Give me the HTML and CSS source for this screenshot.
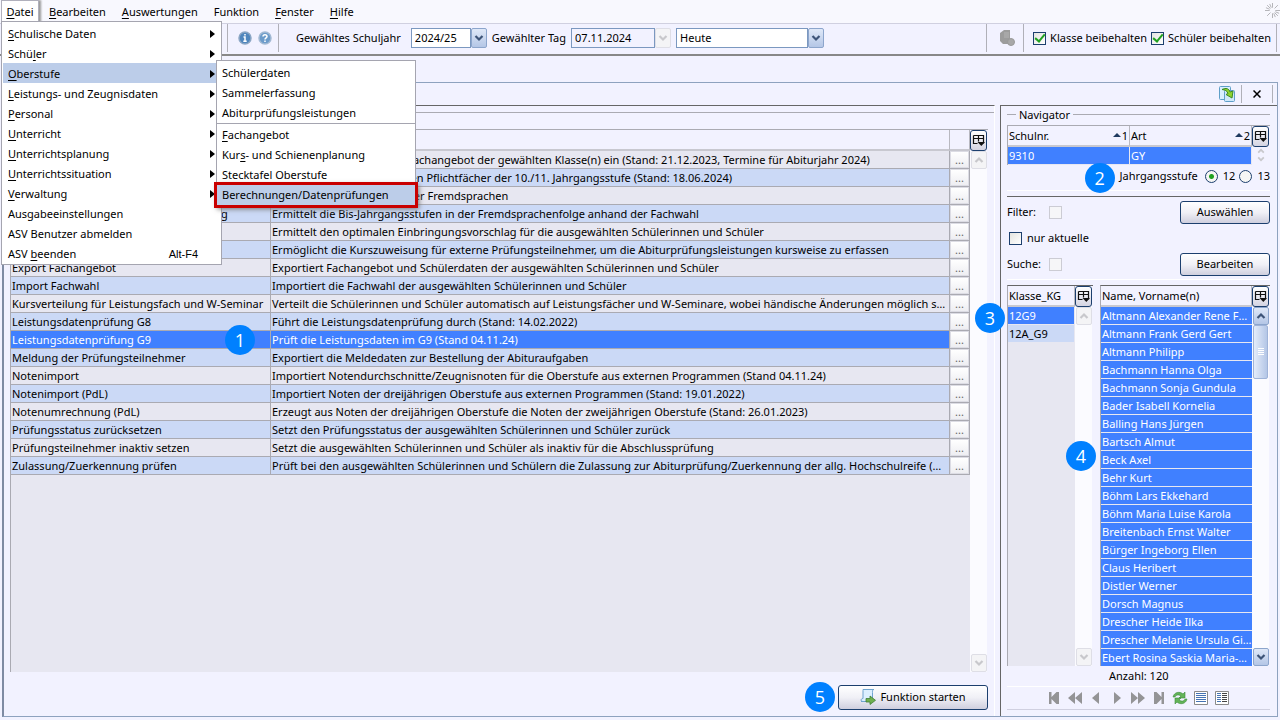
FILE: index.html
```html
<!DOCTYPE html>
<html lang="de">
<head>
  <meta charset="UTF-8">
  <title>ASV</title>
  <link rel="stylesheet" href="styles.css">
</head>
<body>
  <svg width="0" height="0" class="defs">
    <symbol id="columns" viewBox="0 0 14 14">
      <path d="M1.500 1.500h10v8M1.500 1.500v8h4M1.500 4.500h10M6.500 1.500v6" fill="none" stroke="#111" stroke-width="1.200"/>
      <path d="M5.500 8h7.500l-3.700 4z" fill="#111"/>
    </symbol>
    <symbol id="down" viewBox="0 0 10 10">
      <path d="M1.500 3l3.500 3.500l3.500-3.500" fill="none" stroke="currentColor" stroke-width="2.200"/>
    </symbol>
    <symbol id="up" viewBox="0 0 10 10">
      <path d="M1.500 7l3.500-3.500l3.500 3.500" fill="none" stroke="currentColor" stroke-width="2.200"/>
    </symbol>
  </svg>

  <nav class="menubar">
    <div class="menu open">
      <button class="menu-title"><u>D</u>atei</button>
      <div class="popup file-menu">
        <button class="item sub"><u>S</u>chulische Daten</button>
        <button class="item sub">Schü<u>l</u>er</button>
        <button class="item sub active"><u>O</u>berstufe</button>
        <button class="item sub"><u>L</u>eistungs- und Zeugnisdaten</button>
        <button class="item sub"><u>P</u>ersonal</button>
        <button class="item sub"><u>U</u>nterricht</button>
        <button class="item sub"><u>U</u>nterrichtsplanung</button>
        <button class="item sub"><u>U</u>nterrichtssituation</button>
        <button class="item sub"><u>V</u>erwaltung</button>
        <button class="item">Ausgabeeinstellungen</button>
        <button class="item">ASV Benutzer abmelden</button>
        <button class="item">ASV <u>b</u>eenden<kbd>Alt-F4</kbd></button>
      </div>
      <div class="popup sub-menu">
        <button class="item">Schüler<u>d</u>aten</button>
        <button class="item">Sammelerfassung</button>
        <button class="item">Abiturprüfungsleistungen</button>
        <hr>
        <button class="item"><u>F</u>achangebot</button>
        <button class="item">Kur<u>s</u>- und Schienenplanung</button>
        <button class="item">Stecktafel Oberstufe</button>
        <button class="item marked">Berechnungen/Datenprüfungen</button>
      </div>
    </div>
    <button class="menu-title"><u>B</u>earbeiten</button>
    <button class="menu-title"><u>A</u>uswertungen</button>
    <button class="menu-title">Funktion</button>
    <button class="menu-title"><u>F</u>enster</button>
    <button class="menu-title"><u>H</u>ilfe</button>
    <svg class="busy" width="15" height="15" viewBox="0 0 16 16">
      <path d="M8 0v5M8 11v5M0 8h5M11 8h5M2.300 2.300l3.500 3.500M10.200 10.200l3.500 3.500M2.300 13.700l3.500-3.500M10.200 5.800l3.500-3.500M5 1l1.700 4M9.300 11l1.700 4M1 5l4 1.700M11 9.300l4 1.700" stroke="#b0b0b4" fill="none"/>
    </svg>
  </nav>

  <div class="toolbar">
    <div class="tools">
      <svg width="14" height="14" viewBox="0 0 14 14"><circle cx="7" cy="7" r="6" fill="#4f86bd" stroke="#8ba6c4" stroke-width="1.500"/><path d="M7 3v1.600M5.500 6h1.500v4M5.300 10.300h3.400" stroke="#fff" stroke-width="1.500" fill="none"/></svg>
      <svg width="14" height="14" viewBox="0 0 14 14"><circle cx="7" cy="7" r="6" fill="#6c9bca" stroke="#a2b9d3" stroke-width="1.500"/><path d="M5 5.500c0-2.500 4-2.500 4 0c0 1.300-2 1.300-2 3M7 9.500v1.500" stroke="#fff" stroke-width="1.500" fill="none"/></svg>
    </div>
    <label class="year-label" for="year">Gewähltes Schuljahr</label>
    <div class="combo"><select id="year"><option>2024/25</option></select><span class="arrow"><svg width="10" height="10"><use href="#down"/></svg></span></div>
    <label for="day">Gewählter Tag</label>
    <div class="combo"><input id="day" value="07.11.2024"><span class="arrow off"><svg width="10" height="10"><use href="#down"/></svg></span></div>
    <div class="combo when"><select aria-label="Tag"><option>Heute</option></select><span class="arrow"><svg width="10" height="10"><use href="#down"/></svg></span></div>
    <div class="keep">
      <svg width="16" height="16" viewBox="0 0 16 16"><path d="M1 3l4-3h6v9a4 4 0 0 0-1 5l-6 0l-3-3z" fill="#9c9c9c"/><path d="M5 3h5M5 5h5M5 7h5" stroke="#b4b4b4"/><circle cx="12" cy="12" r="3.500" fill="#a8a8a8" stroke="#999"/></svg>
      <div class="checks">
        <label><input type="checkbox" checked>Klasse beibehalten</label>
        <label><input type="checkbox" checked>Schüler beibehalten</label>
      </div>
    </div>
  </div>

  <main class="window">
    <div class="titlebar">
      <button class="plain" aria-label="Aktualisieren">
        <svg width="16" height="16" viewBox="0 0 16 16"><rect x=".500" y=".500" width="11" height="13" rx="1" fill="#d9efff" stroke="#5f9fc8"/><rect x="5.500" y="4.500" width="10" height="11" rx="1" fill="#cfe8fa" stroke="#5f9fc8"/><path d="M3 3.500c4-2 7-1 8 2.500l3-1l-1 7l-6-3.500l2-1c-1-3-3-3.500-6-4z" fill="#8fd32f" stroke="#3d8a25"/></svg>
      </button>
      <button class="plain close" aria-label="Schließen">
        <svg width="8" height="8" viewBox="0 0 8 8"><path d="M.5 .5l7 7M7.500 .5l-7 7" stroke="#000" stroke-width="1.500"/></svg>
      </button>
    </div>
    <div class="columns">
      <section class="functions">
        <div class="group">
          <div class="grid-box">
            <table class="grid list">
              <colgroup><col class="c-name"><col><col class="c-more"></colgroup>
              <thead><tr><th>Name</th><th>Beschreibung</th><th></th></tr></thead>
              <tbody>
                <tr><td>Fachangebot einrichten</td><td>Fügt jeweils das Standard-Fachangebot der gewählten Klasse(n) ein (Stand: 21.12.2023, Termine für Abiturjahr 2024)</td><td><button>...</button></td></tr>
                <tr><td>Belegung Pflichtfächer</td><td>Ergänzt nach verpflichtenden Pflichtfächer der 10./11. Jahrgangsstufe (Stand: 18.06.2024)</td><td><button>...</button></td></tr>
                <tr><td>Beginn der Fremdsprachen</td><td>Ermittelt den Beginn weiterer Fremdsprachen</td><td><button>...</button></td></tr>
                <tr><td>Jahrgangsstufe bei Sprachen Abgleichung</td><td>Ermittelt die Bis-Jahrgangsstufen in der Fremdsprachenfolge anhand der Fachwahl</td><td><button>...</button></td></tr>
                <tr><td>Einbringungsvorschlag</td><td>Ermittelt den optimalen Einbringungsvorschlag für die ausgewählten Schülerinnen und Schüler</td><td><button>...</button></td></tr>
                <tr><td>Externe Prüfungsteilnehmer</td><td>Ermöglicht die Kurszuweisung für externe Prüfungsteilnehmer, um die Abiturprüfungsleistungen kursweise zu erfassen</td><td><button>...</button></td></tr>
                <tr><td>Export Fachangebot</td><td>Exportiert Fachangebot und Schülerdaten der ausgewählten Schülerinnen und Schüler</td><td><button>...</button></td></tr>
                <tr><td>Import Fachwahl</td><td>Importiert die Fachwahl der ausgewählten Schülerinnen und Schüler</td><td><button>...</button></td></tr>
                <tr><td>Kursverteilung für Leistungsfach und W-Seminar</td><td>Verteilt die Schülerinnen und Schüler automatisch auf Leistungsfächer und W-Seminare, wobei händische Änderungen möglich sind</td><td><button>...</button></td></tr>
                <tr><td>Leistungsdatenprüfung G8</td><td>Führt die Leistungsdatenprüfung durch (Stand: 14.02.2022)</td><td><button>...</button></td></tr>
                <tr class="selected"><td class="has-step">Leistungsdatenprüfung G9<span class="step step-1">1</span></td><td>Prüft die Leistungsdaten im G9 (Stand 04.11.24)</td><td><button>...</button></td></tr>
                <tr><td>Meldung der Prüfungsteilnehmer</td><td>Exportiert die Meldedaten zur Bestellung der Abituraufgaben</td><td><button>...</button></td></tr>
                <tr><td>Notenimport</td><td>Importiert Notendurchschnitte/Zeugnisnoten für die Oberstufe aus externen Programmen (Stand 04.11.24)</td><td><button>...</button></td></tr>
                <tr><td>Notenimport (PdL)</td><td>Importiert Noten der dreijährigen Oberstufe aus externen Programmen (Stand: 19.01.2022)</td><td><button>...</button></td></tr>
                <tr><td>Notenumrechnung (PdL)</td><td>Erzeugt aus Noten der dreijährigen Oberstufe die Noten der zweijährigen Oberstufe (Stand: 26.01.2023)</td><td><button>...</button></td></tr>
                <tr><td>Prüfungsstatus zurücksetzen</td><td>Setzt den Prüfungsstatus der ausgewählten Schülerinnen und Schüler zurück</td><td><button>...</button></td></tr>
                <tr><td>Prüfungsteilnehmer inaktiv setzen</td><td>Setzt die ausgewählten Schülerinnen und Schüler als inaktiv für die Abschlussprüfung</td><td><button>...</button></td></tr>
                <tr><td>Zulassung/Zuerkennung prüfen</td><td>Prüft bei den ausgewählten Schülerinnen und Schülern die Zulassung zur Abiturprüfung/Zuerkennung der allg. Hochschulreife (Stand 2024)</td><td><button>...</button></td></tr>
              </tbody>
            </table>
            <div class="side">
              <button class="pick" aria-label="Spalten"><svg width="14" height="14"><use href="#columns"/></svg></button>
              <div class="scroll"><span class="arrow off"><svg width="10" height="10"><use href="#up"/></svg></span><span class="arrow off"><svg width="10" height="10"><use href="#down"/></svg></span></div>
            </div>
          </div>
          <div class="start">
            <span class="step">5</span>
            <button class="push">
              <svg width="16" height="16" viewBox="0 0 16 16"><path d="M3 .500h11c-1.500 0-1.500 1-1.500 3v9h-9.500c-2.500 0-2.500-3 0-3v-8z" fill="#dcefff" stroke="#6fa3cf"/><path d="M1 12.500h9" stroke="#6fa3cf"/><path d="M6 9.500h4v-2.500l5.500 4.300l-5.500 4.200v-2.500h-4z" fill="#6fb04e" stroke="#3f7d35" stroke-width=".8"/></svg>
              Funktion starten
            </button>
          </div>
        </div>
      </section>

      <aside class="navigator">
        <h2>Navigator</h2>
        <div class="grid-box schools">
          <table class="grid">
            <colgroup><col class="c-half"><col></colgroup>
            <thead><tr><th>Schulnr.<span class="sort">1</span></th><th>Art<span class="sort">2</span></th></tr></thead>
            <tbody><tr class="selected"><td>9310</td><td>GY</td></tr></tbody>
          </table>
          <div class="side">
            <button class="pick" aria-label="Spalten"><svg width="14" height="14"><use href="#columns"/></svg></button>
            <div class="spin"><svg width="10" height="8"><use href="#up"/></svg><svg width="10" height="8"><use href="#down"/></svg></div>
          </div>
        </div>
        <div class="level">
          <span class="step">2</span>
          <span>Jahrgangsstufe</span>
          <label><input type="radio" name="level" checked>12</label>
          <label><input type="radio" name="level">13</label>
        </div>
        <div class="filters">
          <div class="row"><label class="caption" for="filter">Filter:</label><input id="filter" type="checkbox" disabled><button class="push">Auswählen</button></div>
          <div class="row"><label><input type="checkbox">nur aktuelle</label></div>
          <div class="row"><label class="caption" for="search">Suche:</label><input id="search" type="checkbox" disabled><button class="push">Bearbeiten</button></div>
        </div>
        <div class="lists">
          <div class="grid-box">
            <table class="grid">
              <thead><tr><th>Klasse_KG</th></tr></thead>
              <tbody><tr class="selected"><td>12G9</td></tr><tr><td>12A_G9</td></tr></tbody>
            </table>
            <div class="side">
              <button class="pick" aria-label="Spalten"><svg width="14" height="14"><use href="#columns"/></svg></button>
              <div class="scroll"><span class="arrow off"><svg width="10" height="10"><use href="#up"/></svg></span><span class="arrow off"><svg width="10" height="10"><use href="#down"/></svg></span></div>
            </div>
            <span class="step step-3">3</span>
            <span class="step step-4">4</span>
          </div>
          <div class="grid-box pupils">
            <table class="grid">
              <thead><tr><th>Name, Vorname(n)</th></tr></thead>
              <tbody>
                <tr class="selected"><td>Altmann Alexander Rene Ferdinand</td></tr>
                <tr class="selected"><td>Altmann Frank Gerd Gert</td></tr>
                <tr class="selected"><td>Altmann Philipp</td></tr>
                <tr class="selected"><td>Bachmann Hanna Olga</td></tr>
                <tr class="selected"><td>Bachmann Sonja Gundula</td></tr>
                <tr class="selected"><td>Bader Isabell Kornelia</td></tr>
                <tr class="selected"><td>Balling Hans Jürgen</td></tr>
                <tr class="selected"><td>Bartsch Almut</td></tr>
                <tr class="selected"><td>Beck Axel</td></tr>
                <tr class="selected"><td>Behr Kurt</td></tr>
                <tr class="selected"><td>Böhm Lars Ekkehard</td></tr>
                <tr class="selected"><td>Böhm Maria Luise Karola</td></tr>
                <tr class="selected"><td>Breitenbach Ernst Walter</td></tr>
                <tr class="selected"><td>Bürger Ingeborg Ellen</td></tr>
                <tr class="selected"><td>Claus Heribert</td></tr>
                <tr class="selected"><td>Distler Werner</td></tr>
                <tr class="selected"><td>Dorsch Magnus</td></tr>
                <tr class="selected"><td>Drescher Heide Ilka</td></tr>
                <tr class="selected"><td>Drescher Melanie Ursula Gisela</td></tr>
                <tr class="selected"><td>Ebert Rosina Saskia Maria-Luise</td></tr>
              </tbody>
            </table>
            <div class="side">
              <button class="pick" aria-label="Spalten"><svg width="14" height="14"><use href="#columns"/></svg></button>
              <div class="scroll"><span class="arrow"><svg width="10" height="10"><use href="#up"/></svg></span><span class="thumb"><svg width="6" height="8" viewBox="0 0 6 8"><path d="M0 .5h6M0 2.500h6M0 4.500h6M0 6.500h6" stroke="#fff"/></svg></span><span class="arrow"><svg width="10" height="10"><use href="#down"/></svg></span></div>
            </div>
          </div>
        </div>
        <p class="count">Anzahl: 120</p>
        <div class="pager">
          <button class="plain" aria-label="Erster"><svg width="12" height="12" viewBox="0 0 12 12"><path d="M1 0h2.500v5l5-5h2.500v12h-2.500l-5-5v5h-2.500z" fill="#949496"/></svg></button>
          <button class="plain" aria-label="Zurückblättern"><svg width="14" height="12" viewBox="0 0 14 12"><path d="M7 0v12l-7-6zM14 0v12l-7-6z" fill="#949496"/></svg></button>
          <button class="plain" aria-label="Voriger"><svg width="12" height="12" viewBox="0 0 12 12"><path d="M9 0v12l-7-6z" fill="#949496"/></svg></button>
          <button class="plain" aria-label="Nächster"><svg width="12" height="12" viewBox="0 0 12 12"><path d="M3 0v12l7-6z" fill="#949496"/></svg></button>
          <button class="plain" aria-label="Vorblättern"><svg width="14" height="12" viewBox="0 0 14 12"><path d="M0 0v12l7-6zM7 0v12l7-6z" fill="#949496"/></svg></button>
          <button class="plain" aria-label="Letzter"><svg width="12" height="12" viewBox="0 0 12 12"><path d="M11 0h-2.500v5l-5-5h-2.500v12h2.500l5-5v5h2.500z" fill="#949496"/></svg></button>
          <button class="plain" aria-label="Neu laden"><svg width="16" height="14" viewBox="0 0 16 14"><path d="M1 6c1-5 7-6 10-3l2-2v6h-6l2-2c-3-2-5-1-6 1z" fill="#63b458" stroke="#3c8a3a" stroke-width=".6"/><path d="M15 8c-1 5-7 6-10 3l-2 2v-6h6l-2 2c3 2 5 1 6-1z" fill="#63b458" stroke="#3c8a3a" stroke-width=".6"/></svg></button>
          <button class="plain" aria-label="Liste"><svg width="14" height="14" viewBox="0 0 14 14"><path d="M.5 .5h13v13h-13z" fill="#fff" stroke="#8a8a8a"/><path d="M2 2.500h10M2 4.500h10M2 6.500h10M2 8.500h10M2 10.500h10" stroke="#4573b3"/></svg></button>
          <button class="plain" aria-label="Details"><svg width="14" height="14" viewBox="0 0 14 14"><path d="M.5 .5h13v13h-13z" fill="#fff" stroke="#8a8a8a"/><path d="M2 2.500h4M2 4.500h4M2 6.500h4M2 8.500h4M2 10.500h4" stroke="#4573b3"/><path d="M7 2.500h5M7 4.500h5M7 6.500h5M7 8.500h5M7 10.500h5" stroke="#444"/></svg></button>
        </div>
      </aside>
    </div>
  </main>
</body>
</html>
```
FILE: styles.css
```css
* {
  box-sizing: border-box;
}

body {
  margin: 0;
  height: 100vh;
  display: flex;
  flex-direction: column;
  background: #f2f2ff;
  color: #000;
  font: 11px/18px "Noto Sans", sans-serif;
  white-space: nowrap;
  overflow: hidden;
}

button, input, select {
  font: inherit;
  color: inherit;
  margin: 0;
}

svg {
  display: block;
  flex: none;
}

u {
  text-underline-offset: 2px;
}

.defs {
  position: absolute;
}

.menubar {
  display: flex;
  height: 24px;
  background: #f8f8fe;
  border-bottom: 1px solid #d0d0e0;
}

.menu {
  position: relative;
}

.menu-title {
  height: 23px;
  padding: 0 8px;
  border: 0;
  background: none;
}

.open .menu-title {
  width: 38px;
  margin: 0 2px 0 1px;
  padding: 0;
  background: #fff;
  border: 1px solid #b0b0bc;
  border-bottom: 0;
  box-shadow: 2px 0 2px #999;
}

.busy {
  margin: 3px 0 0 auto;
}

.popup {
  position: absolute;
  z-index: 2;
  background: #fff;
  border: 1px solid #a5a5b0;
}

.file-menu {
  left: 1px;
  top: 21px;
  width: 221px;
  padding: 1px;
}

.sub-menu {
  left: 216px;
  top: 60px;
  width: 200px;
  z-index: 3;
  padding: 2px 0 1px;
}

.item {
  display: flex;
  align-items: center;
  width: 100%;
  height: 20px;
  padding: 0 5px;
  border: 0;
  background: none;
  text-align: left;
  white-space: pre;
}

.file-menu .item {
  padding-top: 2px;
}

.sub::after {
  content: "";
  margin-left: auto;
  border: 4px solid transparent;
  border-left: 5px solid #000;
  border-right: 0;
}

.active, .marked {
  background: #bccde9;
}

.marked {
  outline: 3px solid #c90000;
  box-shadow: 2px 2px 5px 2px #777;
}

.item kbd {
  margin: 0 17px 0 auto;
  font: 11px "Liberation Sans", sans-serif;
}

.popup hr {
  margin: 0 0 1px;
  border: 0;
  border-top: 1px solid #a5a5b0;
}

.toolbar {
  display: flex;
  align-items: center;
  height: 32px;
  padding: 0 3px 2px 227px;
  border-bottom: 2px solid #888;
}

.tools {
  display: flex;
  align-items: center;
  gap: 6px;
  height: 28px;
  padding: 0 6px 0 10px;
  border: 1px solid #b0b0b8;
  border-width: 0 1px;
}

.year-label {
  margin: 0 5px 0 17px;
}

.combo {
  display: flex;
  height: 20px;
  margin: 0 5px;
}

.combo select, .combo input {
  appearance: none;
  width: 60px;
  padding: 0 3px;
  border: 1px solid #7b98c0;
  border-radius: 0;
  background: #fff;
}

.combo input {
  width: 84px;
  background: #f2f2ff;
}

.combo.when {
  margin-left: 0;
}

.when select {
  width: 132px;
}

.arrow {
  display: flex;
  align-items: center;
  justify-content: center;
  width: 16px;
  height: 18px;
  color: #3d5478;
  background: linear-gradient(#dfe8f8, #b4c6e6);
  border: 1px solid #8ca5cc;
  border-radius: 2px;
}

.combo .arrow {
  height: 20px;
}

.arrow.off {
  color: #c8c8cc;
  background: #f4f4f6;
  border-color: #dedee6;
}

.keep {
  display: flex;
  align-items: center;
  gap: 8px;
  margin-left: auto;
  padding-left: 12px;
  height: 28px;
  border-left: 1px solid #b0b0b8;
}

.checks {
  display: flex;
  align-items: center;
  gap: 4px;
  height: 28px;
  padding: 0 5px 0 9px;
  border: 1px solid #b0b0b8;
  border-width: 0 1px;
}

label {
  display: flex;
  align-items: center;
}

input[type="checkbox"] {
  appearance: none;
  display: grid;
  place-items: center;
  width: 13px;
  height: 13px;
  margin-right: 4px;
  border: 1px solid #1c3f6e;
  background: linear-gradient(135deg, #e4e4e0, #fff);
}

input[type="checkbox"]:checked::after {
  content: "";
  width: 4px;
  height: 8px;
  margin-top: -2px;
  border: solid #21a121;
  border-width: 0 2px 2px 0;
  transform: rotate(40deg);
}

input[type="checkbox"]:disabled {
  border-color: #ccccd4;
  background: #f6f6f8;
}

input[type="radio"] {
  appearance: none;
  width: 13px;
  height: 13px;
  margin: 0 5px 0 0;
  border: 1px solid #1c3f6e;
  border-radius: 50%;
  background: #f6f6f4;
}

input[type="radio"]:checked {
  background: radial-gradient(#21a121 0 2px, #f6f6f4 3px);
}

.window {
  flex: 1;
  min-height: 0;
  display: flex;
  flex-direction: column;
  margin: 26px 2px 3px;
  border: 1px solid #8ea2bf;
  border-left: 2px solid #7f8ba3;
}

.titlebar {
  display: flex;
  justify-content: flex-end;
  align-items: center;
  height: 22px;
  padding-right: 4px;
}

.plain {
  display: grid;
  place-items: center;
  padding: 0;
  border: 0;
  background: none;
}

.close {
  width: 32px;
  height: 18px;
  margin-left: 6px;
  border: 1px solid #b0b0b8;
  border-width: 0 1px;
}

.columns {
  flex: 1;
  min-height: 0;
  display: grid;
  grid-template: minmax(0, 1fr) / minmax(0, 1fr) 277px;
  gap: 5px;
}

.functions {
  border-top: 1px solid #666;
  padding-top: 6px;
  border-right: 1px solid #fff;
  display: flex;
}

.group {
  flex: 1;
  min-width: 0;
  display: flex;
  flex-direction: column;
  border-top: 1px solid #aaaab2;
  padding: 16px 6px 0 6px;
}

.grid-box {
  display: flex;
  align-items: flex-start;
  flex: 1;
  min-height: 0;
  background: #e7e7f1;
  border: 1px solid #aaaab2;
  border-width: 1px 0 0 1px;
  position: relative;
}

.grid {
  flex: 1;
  width: 0;
  table-layout: fixed;
  border-collapse: separate;
  border-spacing: 0;
}

.grid th {
  height: 21px;
  padding: 0 1px;
  background: #f2f2ff;
  border-right: 1px solid #b8b8c0;
  border-bottom: 2px solid #c8c8d0;
  font-weight: normal;
  text-align: left;
}

.grid td {
  height: 18px;
  padding: 0 0 0 1px;
  overflow: hidden;
  text-overflow: ellipsis;
  line-height: 17px;
  border: 1px solid #aaaab2;
  border-width: 0 1px 1px 0;
}

.grid tr:nth-child(even) td {
  background: #cbd9f6;
}

.grid tr.selected td {
  background: #4080ff;
  color: #fff;
}

.navigator .grid td {
  border-color: #e7e7f1;
}

.navigator .pupils td {
  border-right: 0;
}

.c-name {
  width: 260px;
}

.c-more {
  width: 20px;
}

.c-half {
  width: 122px;
}

.list td {
  padding-right: 3px;
}

.list td:last-child {
  padding: 0;
}

.list td button {
  display: block;
  width: 19px;
  height: 17px;
  padding: 0;
  line-height: 16px;
  color: #666;
  background: linear-gradient(#fff, #eeeef2);
  border: 1px solid #dcdce4;
}

.side {
  align-self: stretch;
  display: flex;
  flex-direction: column;
  width: 18px;
  background: #f2f2ff;
}

.pick {
  display: grid;
  place-items: center;
  width: 17px;
  height: 21px;
  padding: 0;
  border: 1px solid #1c3f6e;
  border-radius: 3px;
  background: linear-gradient(#fff, #d4d4e2);
}

.scroll {
  flex: 1;
  display: flex;
  flex-direction: column;
  justify-content: space-between;
  align-items: center;
  width: 17px;
  background: #fbfbff;
}

.thumb {
  display: grid;
  place-items: center;
  width: 15px;
  height: 54px;
  margin-bottom: auto;
  border: 1px solid #9fb3d8;
  border-radius: 2px;
  background: linear-gradient(90deg, #e4ecfa, #b4c6e6);
}

.spin {
  display: grid;
  justify-content: center;
  color: #c8c8cc;
}

.start {
  display: flex;
  justify-content: flex-end;
  align-items: center;
  gap: 3px;
  padding: 10px 0 4px;
}

.push {
  display: flex;
  align-items: center;
  justify-content: center;
  gap: 4px;
  width: 90px;
  height: 23px;
  padding: 0;
  border: 1px solid #1c3f6e;
  border-radius: 3px;
  background: linear-gradient(#fff, #f0f0f6 50%, #cfcfde);
}

.start .push {
  width: 150px;
  height: 25px;
}

.step {
  position: relative;
  z-index: 1;
  display: grid;
  place-items: center;
  width: 30px;
  height: 30px;
  border-radius: 50%;
  background: #0080ff;
  color: #fff;
  font: 18px "Open Sans", sans-serif;
}

.grid td.has-step {
  position: relative;
  overflow: visible;
}

.step-1, .step-3, .step-4 {
  position: absolute;
}

.step-1 {
  right: 15px;
  top: -6px;
}

.step-3 {
  left: -33px;
  top: 17px;
}

.step-4 {
  left: 58px;
  top: 155px;
}

.navigator {
  display: flex;
  flex-direction: column;
  min-width: 0;
  padding: 0 7px 0 6px;
  border: 1px solid #666;
  border-width: 1px 0 0 1px;
}

.navigator h2 {
  display: flex;
  align-items: center;
  gap: 3px;
  height: 19px;
  margin: 0;
  padding-bottom: 2px;
  font-size: 11px;
  font-weight: normal;
}

.navigator h2::before, .navigator h2::after {
  content: "";
  width: 9px;
  border-top: 1px solid #aaaab2;
}

.navigator h2::after {
  flex: 1;
}

.schools {
  flex: none;
}

.sort {
  float: right;
}

.sort::before {
  content: "";
  display: inline-block;
  margin: 0 1px 3px 0;
  border: 4px solid transparent;
  border-bottom: 4px solid #1f3a5f;
  border-top: 0;
}

.level {
  display: flex;
  align-items: center;
  justify-content: flex-end;
  gap: 4px;
  height: 26px;
  padding-bottom: 3px;
  border-bottom: 1px solid #fff;
}

.level .step {
  margin: 4px 1px 0 0;
}

.level label:nth-of-type(1) {
  margin-left: 3px;
}

.filters {
  margin-top: 5px;
  padding: 2px 0;
  border-top: 1px solid #666;
  border-bottom: 1px solid #fff;
}

.row {
  display: flex;
  align-items: center;
  height: 26px;
}

.row .push {
  margin-left: auto;
}

.caption {
  width: 42px;
}

.row label input {
  margin: 0 5px 0 2px;
}

.lists {
  flex: 1;
  min-height: 0;
  display: grid;
  grid-template: minmax(0, 1fr) / 86px minmax(0, 1fr);
  gap: 7px;
  margin-top: 5px;
}

.lists .grid-box {
  border-top-color: #666;
}

.pupils {
  overflow: hidden;
}

.count {
  margin: 0 0 0 102px;
  height: 20px;
  line-height: 20px;
}

.pager {
  display: flex;
  align-items: center;
  gap: 7px;
  height: 24px;
  margin-bottom: 6px;
  padding-left: 40px;
  border-top: 1px solid #fff;
  border-bottom: 1px solid #d0d0e0;
}

.pager .plain {
  width: 14px;
  place-content: center;
}
```
